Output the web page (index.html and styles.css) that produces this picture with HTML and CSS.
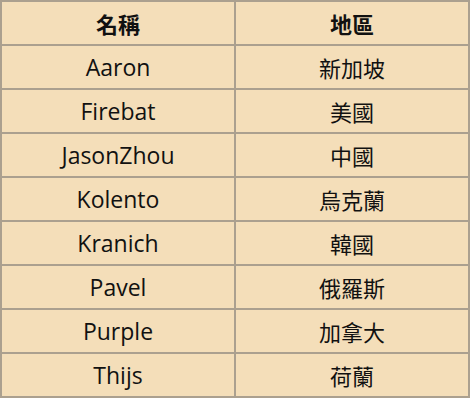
FILE: index.html
```html
<!DOCTYPE html>
<html lang="zh-Hant">
<head>
<meta charset="utf-8">
<link rel="stylesheet" href="styles.css">
</head>
<body>
<table class="players">
  <thead>
    <tr><th>名稱</th><th>地區</th></tr>
  </thead>
  <tbody>
    <tr><td class="name">Aaron</td><td>新加坡</td></tr>
    <tr><td class="name">Firebat</td><td>美國</td></tr>
    <tr><td class="name">JasonZhou</td><td>中國</td></tr>
    <tr><td class="name">Kolento</td><td>烏克蘭</td></tr>
    <tr><td class="name">Kranich</td><td>韓國</td></tr>
    <tr><td class="name">Pavel</td><td>俄羅斯</td></tr>
    <tr><td class="name">Purple</td><td>加拿大</td></tr>
    <tr><td class="name">Thijs</td><td>荷蘭</td></tr>
  </tbody>
</table>
</body>
</html>
```
FILE: styles.css
```css
html, body {
  margin: 0;
  padding: 0;
  background: #ffffff;
}
.players {
  border-collapse: collapse;
  width: 470px;
  margin: 0;
  font-family: "Open Sans", "Noto Sans CJK TC", sans-serif;
  font-size: 22px;
  color: #111;
  background: #f4deb9;
}
.players th, .players td {
  border: 2px solid #aba08f;
  height: 42px;
  padding: 0;
  text-align: center;
  vertical-align: middle;
  width: 50%;
}
.players th {
  font-weight: bold;
}
.players .name {
  font-size: 23px;
}
```
